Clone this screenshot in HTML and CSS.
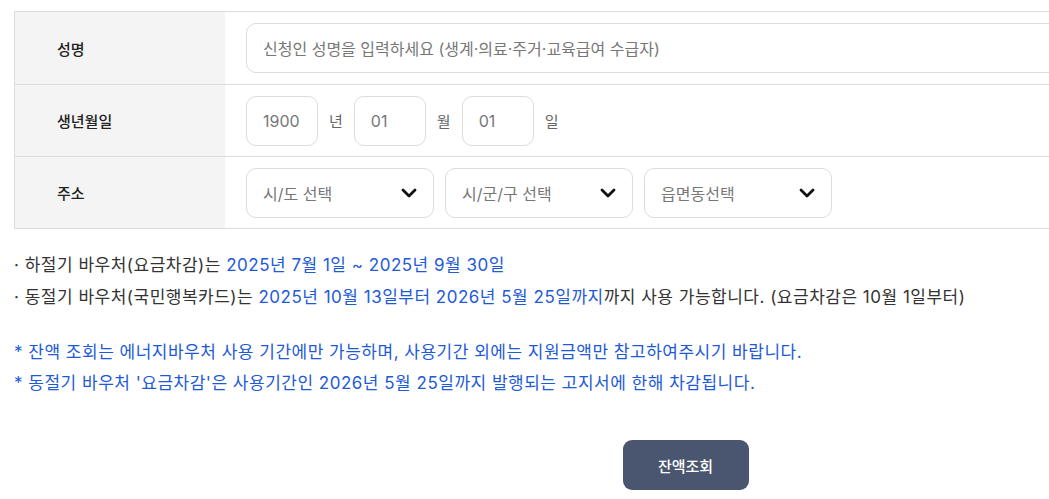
FILE: index.html
```html
<!DOCTYPE html>
<html lang="ko">
<head>
<meta charset="utf-8">
<link rel="stylesheet" href="styles.css">
</head>
<body>
<div class="page">
  <div class="form">
    <div class="row">
      <div class="label">성명</div>
      <div class="field">
        <div class="input input-wide"><span class="ph">신청인 성명을 입력하세요 (생계·의료·주거·교육급여 수급자)</span></div>
      </div>
    </div>
    <div class="row">
      <div class="label">생년월일</div>
      <div class="field">
        <div class="input input-num"><span class="ph">1900</span></div>
        <span class="unit">년</span>
        <div class="input input-num"><span class="ph">01</span></div>
        <span class="unit">월</span>
        <div class="input input-num"><span class="ph">01</span></div>
        <span class="unit">일</span>
      </div>
    </div>
    <div class="row">
      <div class="label">주소</div>
      <div class="field">
        <div class="input select"><span class="ph">시/도 선택</span><svg class="chev" viewBox="0 0 16 10" width="16" height="10"><path d="M2 2 L8 8 L14 2" fill="none" stroke="#111" stroke-width="2.8" stroke-linecap="round" stroke-linejoin="round"/></svg></div>
        <div class="input select"><span class="ph">시/군/구 선택</span><svg class="chev" viewBox="0 0 16 10" width="16" height="10"><path d="M2 2 L8 8 L14 2" fill="none" stroke="#111" stroke-width="2.8" stroke-linecap="round" stroke-linejoin="round"/></svg></div>
        <div class="input select"><span class="ph">읍면동선택</span><svg class="chev" viewBox="0 0 16 10" width="16" height="10"><path d="M2 2 L8 8 L14 2" fill="none" stroke="#111" stroke-width="2.8" stroke-linecap="round" stroke-linejoin="round"/></svg></div>
      </div>
    </div>
  </div>

  <div class="notes">
    <p>· 하절기 바우처(요금차감)는 <span class="blue">2025년 7월 1일 ~ 2025년 9월 30일</span></p>
    <p>· 동절기 바우처(국민행복카드)는 <span class="blue">2025년 10월 13일부터 2026년 5월 25일까지</span>까지 사용 가능합니다. (요금차감은 10월 1일부터)</p>
  </div>
  <div class="notes notes-blue">
    <p>* 잔액 조회는 에너지바우처 사용 기간에만 가능하며, 사용기간 외에는 지원금액만 참고하여주시기 바랍니다.</p>
    <p>* 동절기 바우처 '요금차감'은 사용기간인 2026년 5월 25일까지 발행되는 고지서에 한해 차감됩니다.</p>
  </div>

  <div class="actions">
    <button class="btn">잔액조회</button>
  </div>
</div>
</body>
</html>
```
FILE: styles.css
```css
html, body {
  margin: 0;
  padding: 0;
  overflow: hidden;
  background: #fff;
}
body {
  font-family: "Inter", "Noto Sans CJK KR", "Noto Sans", sans-serif;
  color: #333;
}
.page {
  padding: 11px 0 0 14px;
  width: 1200px;
}
.form {
  width: 1100px;
  border-top: 1px solid #dcdcdc;
  border-left: 1px solid #dcdcdc;
}
.row {
  display: flex;
  height: 71px;
  border-bottom: 1px solid #dcdcdc;
}
.row:first-child {
  height: 72px;
}
.label {
  width: 210px;
  flex: none;
  background: #f4f4f4;
  display: flex;
  align-items: center;
  padding-left: 42px;
  box-sizing: border-box;
  font-size: 15px;
  font-weight: 500;
  color: #222;
}
.field {
  flex: 1;
  display: flex;
  align-items: center;
  padding-left: 21px;
  gap: 11px;
}
.input {
  height: 50px;
  box-sizing: border-box;
  border: 1px solid #dcdcdc;
  border-radius: 10px;
  display: flex;
  align-items: center;
  padding-left: 16px;
  font-size: 16px;
  background: #fff;
}
.ph {
  color: #777;
}
.input-wide {
  width: 820px;
}
.input-num {
  width: 72px;
}
.unit {
  font-size: 15px;
  color: #666;
}
.select {
  width: 188px;
  justify-content: space-between;
  padding-right: 16px;
}
.chev {
  display: block;
}
.notes {
  margin-top: 20px;
  font-size: 17px;
  letter-spacing: 0.5px;
  color: #333;
}
.notes p {
  margin: 0;
  line-height: 32px;
}
.blue {
  color: #1e5ad8;
}
.notes-blue {
  margin-top: 24px;
  color: #1e5ad8;
}
.notes-blue p {
  line-height: 31px;
}
.actions {
  width: 1035px;
  display: flex;
  justify-content: center;
  margin-top: 41px;
}
.btn {
  width: 126px;
  height: 50px;
  border: none;
  border-radius: 9px;
  background: #4a566f;
  color: #fff;
  font-family: inherit;
  font-size: 15px;
  font-weight: 500;
  margin-left: 308px;
}
```
